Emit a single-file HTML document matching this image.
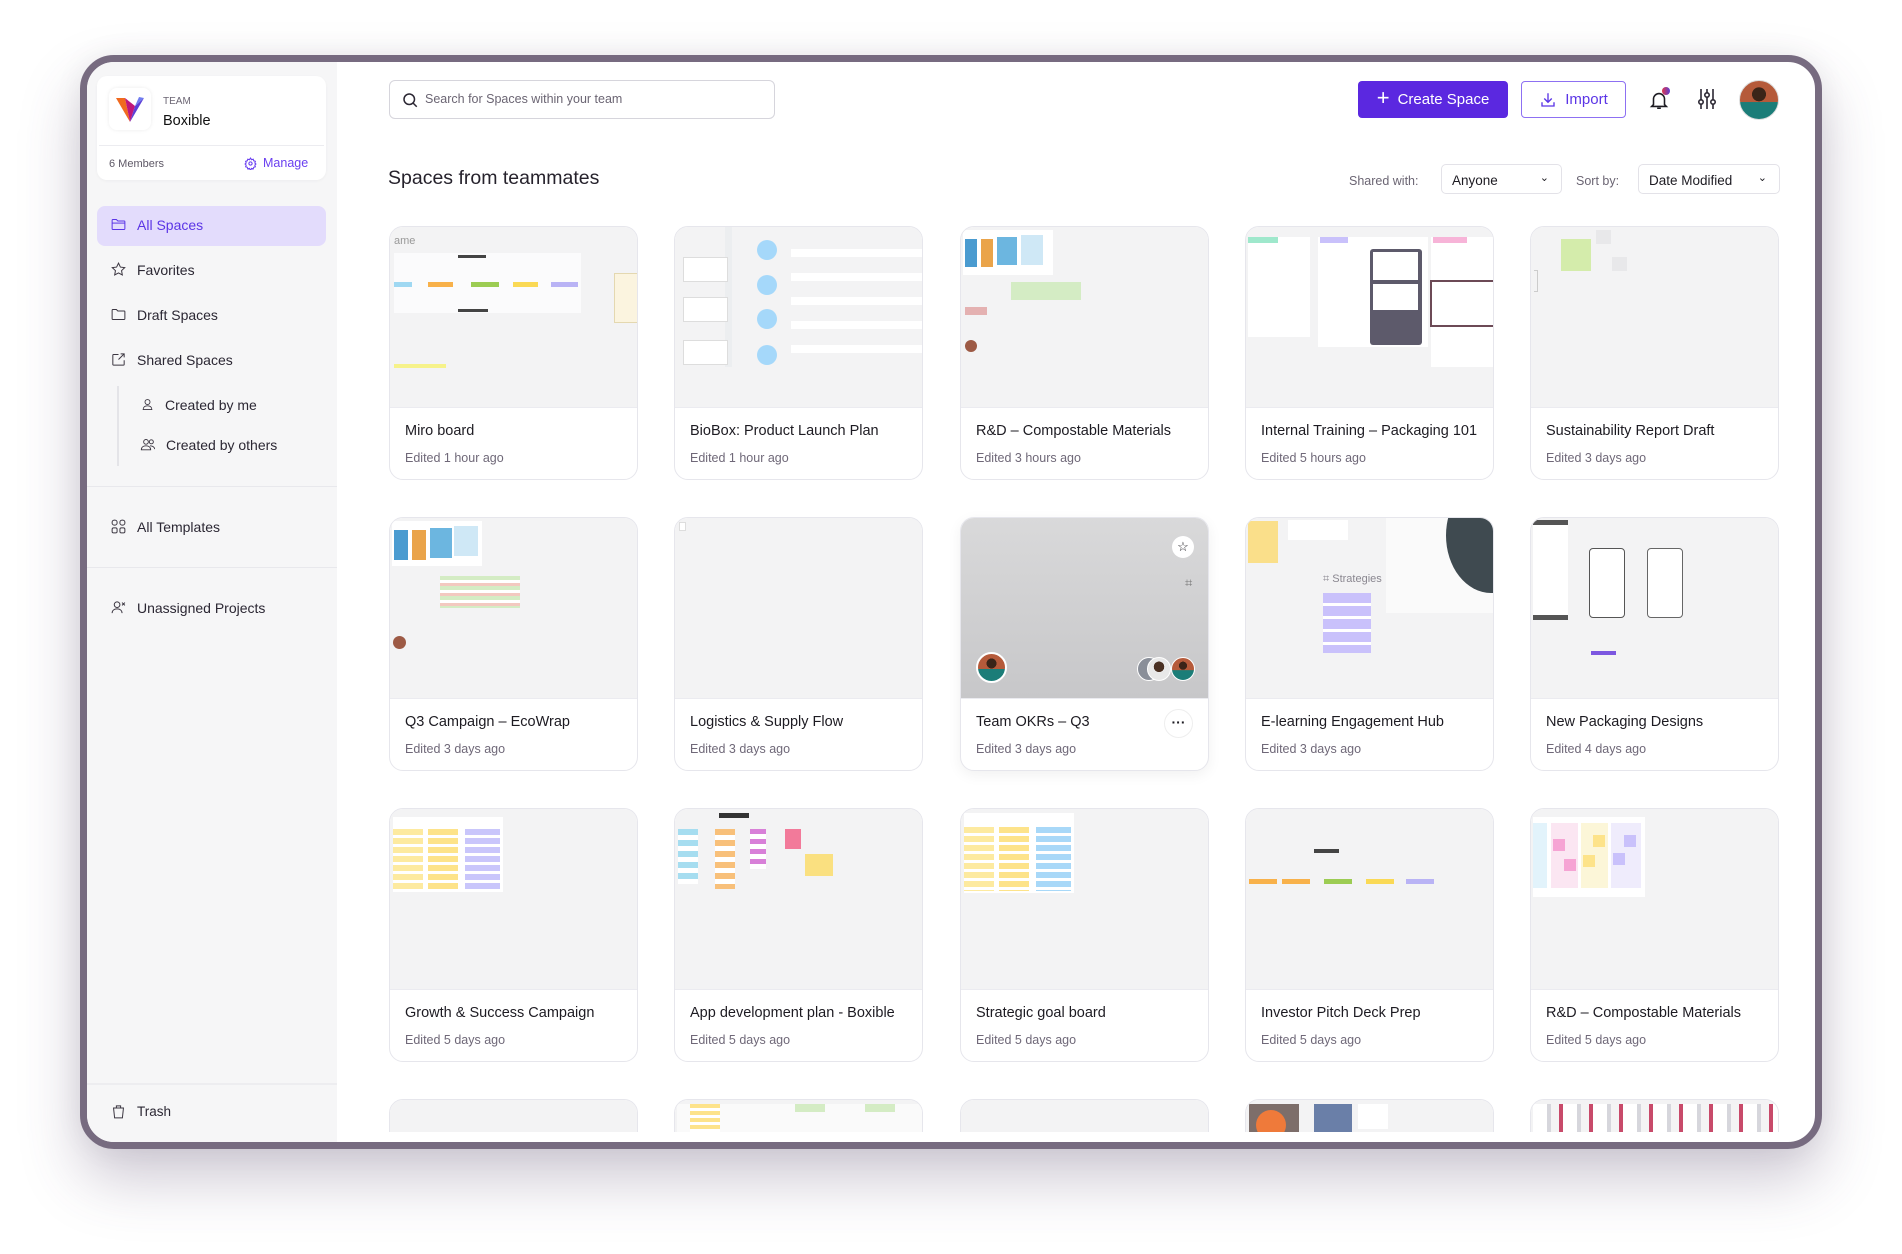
<!DOCTYPE html>
<html><head><meta charset="utf-8"><style>
*{box-sizing:border-box;margin:0;padding:0}
html,body{width:1902px;height:1254px;overflow:hidden}
body{background:#fff;font-family:"Liberation Sans",sans-serif;position:relative;color:#1d1b22}
.frame{position:absolute;left:80px;top:55px;width:1742px;height:1094px;border:7px solid #776b80;border-radius:34px;background:#fff;overflow:hidden;box-shadow:0 30px 60px rgba(80,60,100,.28),0 0 30px rgba(0,0,0,.06)}
.abs{position:absolute}
.side{left:0;top:0;width:250px;height:100%;background:#f6f6f7}
.tc{left:10px;top:14px;width:229px;height:104px;background:#fff;border-radius:10px;box-shadow:0 1px 3px rgba(0,0,0,.04)}
.nav{position:absolute;left:35px;font-size:14px;color:#2b2733;display:flex;align-items:center;gap:10px}
.nav svg{width:17px;height:17px;fill:none;stroke:#3a3540;stroke-width:1.4}
.hr{position:absolute;left:0;width:250px;height:1px;background:#e8e8ec}
.main{left:250px;top:0;right:0;height:1070px;overflow:hidden}
.card{position:absolute;width:249px;height:254px;border:1px solid #e6e6ec;border-radius:14px;background:#fff;overflow:hidden}
.th{position:absolute;left:0;top:0;width:100%;height:181px;background:#f3f3f4;border-bottom:1px solid #ebebf0;overflow:hidden}
.t{position:absolute;left:15px;top:196px;font-size:14.5px;color:#1d1b22;white-space:nowrap}
.s{position:absolute;left:15px;top:224px;font-size:12.5px;color:#6f6878}
.b{position:absolute}
</style></head><body>
<div class="frame">
 <div class="abs side">
  <div class="abs tc">
   <div class="abs" style="left:12px;top:12px;width:42px;height:42px;border-radius:8px;background:#fff;box-shadow:0 0 4px rgba(0,0,0,.08)">
    <svg width="42" height="42" viewBox="0 0 42 42"><path d="M7 10 L21 34 L16 10Z" fill="#f06a1f"/><path d="M16 10 L21 34 L26 18Z" fill="#c0177a"/><path d="M26 18 L21 34 L35 10Z" fill="#5b3fd6"/><path d="M26 18 L35 10 L30 9Z" fill="#6f7cf0"/></svg>
   </div>
   <div class="abs" style="left:66px;top:20px;font-size:10px;color:#6b6573">TEAM</div>
   <div class="abs" style="left:66px;top:37px;font-size:14.5px;color:#111">Boxible</div>
   <div class="abs" style="left:2px;top:69px;width:225px;height:1px;background:#ececf0"></div>
   <div class="abs" style="left:12px;top:82px;font-size:11px;color:#5e5866">6 Members</div>
   <div class="abs" style="left:147px;top:80px;font-size:12.5px;color:#6a3ff0;display:flex;align-items:center;gap:6px"><svg width="13" height="13" viewBox="0 0 24 24" fill="none" stroke="#6a3ff0" stroke-width="2"><circle cx="12" cy="12" r="3"/><path d="M12 2l2 3 3-1 1 3 3 1-1 3 2 2-2 2 1 3-3 1-1 3-3-1-2 3-2-3-3 1-1-3-3-1 1-3-2-2 2-2-1-3 3-1 1-3 3 1z"/></svg>Manage</div>
  </div>
  <div class="abs" style="left:10px;top:144px;width:229px;height:40px;background:#e3dcfc;border-radius:8px"></div>
  <div class="nav" style="top:154px;left:13px;color:#5b35e6;padding-left:10px"><svg viewBox="0 0 24 24" style="stroke:#5b35e6"><path d="M3 6a1 1 0 011-1h5l2 2h9a1 1 0 011 1v10a1 1 0 01-1 1H4a1 1 0 01-1-1z"/><path d="M3 10h18"/></svg>All Spaces</div>
  <div class="nav" style="top:199px;left:23px"><svg viewBox="0 0 24 24"><path d="M12 3l2.7 5.6 6.1.8-4.5 4.2 1.1 6.1L12 16.8 6.6 19.7l1.1-6.1L3.2 9.4l6.1-.8z"/></svg>Favorites</div>
  <div class="nav" style="top:244px;left:23px"><svg viewBox="0 0 24 24"><path d="M3 6a1 1 0 011-1h5l2 2h9a1 1 0 011 1v10a1 1 0 01-1 1H4a1 1 0 01-1-1z"/></svg>Draft Spaces</div>
  <div class="nav" style="top:289px;left:23px"><svg viewBox="0 0 24 24"><path d="M20 13v6a1 1 0 01-1 1H5a1 1 0 01-1-1V6a1 1 0 011-1h7"/><path d="M15 4h5v5M20 4l-8 8"/></svg>Shared Spaces</div>
  <div class="abs" style="left:30px;top:324px;width:2px;height:80px;background:#e4e4e8"></div>
  <div class="nav" style="top:334px;left:53px"><svg viewBox="0 0 24 24" style="width:15px"><circle cx="12" cy="8" r="4"/><path d="M5 20c0-4 3-6 7-6s7 2 7 6z"/></svg>Created by me</div>
  <div class="nav" style="top:374px;left:53px"><svg viewBox="0 0 24 24" style="width:16px"><circle cx="9" cy="8" r="3.5"/><circle cx="17" cy="8" r="3"/><path d="M2 20c0-4 3-6 7-6s7 2 7 6zM15 14c4 0 7 2 7 5"/></svg>Created by others</div>
  <div class="hr" style="top:424px"></div>
  <div class="nav" style="top:456px;left:23px"><svg viewBox="0 0 24 24"><rect x="3" y="3" width="7" height="7" rx="3"/><rect x="14" y="3" width="7" height="7" rx="3"/><rect x="3" y="14" width="7" height="7" rx="2"/><rect x="14" y="14" width="7" height="7" rx="2"/></svg>All Templates</div>
  <div class="hr" style="top:505px"></div>
  <div class="nav" style="top:537px;left:23px"><svg viewBox="0 0 24 24"><circle cx="10" cy="8" r="4"/><path d="M3 20c0-4 3-6 7-6s7 2 7 6M17 5l4 4M21 5l-4 4"/></svg>Unassigned Projects</div>
  <div class="hr" style="top:1021px;height:2px;background:#ededf0"></div>
  <div class="nav" style="top:1041px;left:23px;font-size:13.5px"><svg viewBox="0 0 24 24"><path d="M5 7h14l-1.5 14h-11zM9 7V4h6v3"/></svg>Trash</div>
 </div>

 <div class="abs main">
  <div class="abs" style="left:52px;top:18px;width:386px;height:39px;border:1px solid #d6d5dc;border-radius:6px"></div>
  <svg class="abs" style="left:64px;top:29px" width="18" height="18" viewBox="0 0 24 24" fill="none" stroke="#2b2733" stroke-width="2"><circle cx="11" cy="11" r="7"/><path d="M16 16l5 5"/></svg>
  <div class="abs" style="left:88px;top:30px;font-size:12.5px;color:#6b6573">Search for Spaces within your team</div>
  <div class="abs" style="left:1021px;top:19px;width:150px;height:37px;background:#5b28e0;border-radius:4px;color:#fff;font-size:15px;display:flex;align-items:center;justify-content:center;gap:8px"><span style="font-size:22px;font-weight:300;margin-top:-3px">+</span>Create Space</div>
  <div class="abs" style="left:1184px;top:19px;width:105px;height:37px;border:1.5px solid #8d70f2;border-radius:4px;color:#5b35e6;font-size:15px;display:flex;align-items:center;justify-content:center;gap:8px"><svg width="18" height="18" viewBox="0 0 24 24" fill="none" stroke="#5b35e6" stroke-width="1.8"><path d="M12 3v12M7 10l5 5 5-5M4 15v5h16v-5"/></svg>Import</div>
  <svg class="abs" style="left:1311px;top:26px" width="22" height="24" viewBox="0 0 24 24" fill="none" stroke="#1d1b22" stroke-width="1.7"><path d="M6 17V11a6 6 0 0112 0v6l2 2H4z M10 21h4"/></svg>
  <div class="abs" style="left:1325px;top:25px;width:8px;height:8px;border-radius:50%;background:linear-gradient(90deg,#e0364a,#5b3fd6)"></div>
  <svg class="abs" style="left:1360px;top:26px" width="20" height="22" viewBox="0 0 20 22" fill="none" stroke="#2b2733" stroke-width="1.6"><path d="M4 1v20M10 1v20M16 1v20"/><circle cx="4" cy="14" r="2.2" fill="#fff"/><circle cx="10" cy="7" r="2.2" fill="#fff"/><circle cx="16" cy="14" r="2.2" fill="#fff"/></svg>
  <div class="abs" style="left:1402px;top:18px;width:40px;height:40px;border-radius:50%;background:radial-gradient(circle at 50% 35%,#3a2418 0 22%,transparent 23%),linear-gradient(180deg,#b55a3a 0 55%,#1b7d78 56%);border:1.5px solid #ddd"></div>

  <div class="abs" style="left:51px;top:105px;font-size:19.5px;color:#26222c">Spaces from teammates</div>
  <div class="abs" style="left:1012px;top:112px;font-size:12.5px;color:#6b6573">Shared with:</div>
  <div class="abs" style="left:1104px;top:102px;width:121px;height:30px;border:1px solid #e3e2e8;border-radius:5px;font-size:13.5px;padding:8px 0 0 10px">Anyone<span style="position:absolute;right:12px;top:6px;font-size:11px">⌄</span></div>
  <div class="abs" style="left:1239px;top:112px;font-size:12.5px;color:#6b6573">Sort by:</div>
  <div class="abs" style="left:1301px;top:102px;width:142px;height:30px;border:1px solid #e3e2e8;border-radius:5px;font-size:13.5px;padding:8px 0 0 10px">Date Modified<span style="position:absolute;right:12px;top:6px;font-size:11px">⌄</span></div>

  <!-- row1 -->
  <div class="card" style="left:52px;top:164px"><div class="th">
   <div class="b" style="left:4px;top:8px;font-size:11px;color:#999">ame</div>
   <div class="b" style="left:4px;top:26px;width:187px;height:60px;background:#fbfbfc"></div>
   <div class="b" style="left:4px;top:55px;width:18px;height:5px;background:#9fd8f2"></div><div class="b" style="left:38px;top:55px;width:25px;height:5px;background:#f8b14a"></div><div class="b" style="left:81px;top:55px;width:28px;height:5px;background:#9ccc53"></div><div class="b" style="left:123px;top:55px;width:25px;height:5px;background:#fad955"></div><div class="b" style="left:161px;top:55px;width:27px;height:5px;background:#b9b3f5"></div>
   <div class="b" style="left:68px;top:28px;width:28px;height:3px;background:#444"></div><div class="b" style="left:68px;top:82px;width:30px;height:3px;background:#444"></div>
   <div class="b" style="left:224px;top:46px;width:25px;height:50px;background:#fbf4df;border:1px solid #e4d8b0"></div>
   <div class="b" style="left:4px;top:137px;width:52px;height:4px;background:#f6f28a"></div>
  </div><div class="t">Miro board</div><div class="s">Edited 1 hour ago</div></div>

  <div class="card" style="left:337px;top:164px"><div class="th">
   <div class="b" style="left:50px;top:0;width:7px;height:140px;background:#eceef0"></div>
   <div class="b" style="left:8px;top:30px;width:45px;height:25px;background:#fff;border:1px solid #ddd"></div>
   <div class="b" style="left:8px;top:70px;width:45px;height:25px;background:#fff;border:1px solid #ddd"></div>
   <div class="b" style="left:8px;top:113px;width:45px;height:25px;background:#fff;border:1px solid #ddd"></div>
   <div class="b" style="left:82px;top:13px;width:20px;height:20px;border-radius:50%;background:#a5d8fa"></div>
   <div class="b" style="left:82px;top:48px;width:20px;height:20px;border-radius:50%;background:#a5d8fa"></div>
   <div class="b" style="left:82px;top:82px;width:20px;height:20px;border-radius:50%;background:#a5d8fa"></div>
   <div class="b" style="left:82px;top:118px;width:20px;height:20px;border-radius:50%;background:#a5d8fa"></div>
   <div class="b" style="left:116px;top:12px;width:133px;height:130px;background:repeating-linear-gradient(180deg,transparent 0 10px,#fff 10px 18px,transparent 18px 24px)"></div>
  </div><div class="t">BioBox: Product Launch Plan</div><div class="s">Edited 1 hour ago</div></div>

  <div class="card" style="left:623px;top:164px"><div class="th">
   <div class="b" style="left:2px;top:3px;width:90px;height:45px;background:#fff"></div>
   <div class="b" style="left:4px;top:12px;width:12px;height:28px;background:#4a9bd0"></div><div class="b" style="left:20px;top:12px;width:12px;height:28px;background:#eaa44a"></div><div class="b" style="left:36px;top:10px;width:20px;height:28px;background:#6cb6e0"></div><div class="b" style="left:60px;top:8px;width:22px;height:30px;background:#cfe8f6"></div>
   <div class="b" style="left:50px;top:55px;width:70px;height:18px;background:#d4ecc4"></div>
   <div class="b" style="left:4px;top:80px;width:22px;height:8px;background:#e4b1b1"></div>
   <div class="b" style="left:4px;top:113px;width:12px;height:12px;border-radius:50%;background:#9d5a45"></div>
  </div><div class="t">R&amp;D – Compostable Materials</div><div class="s">Edited 3 hours ago</div></div>

  <div class="card" style="left:908px;top:164px"><div class="th">
   <div class="b" style="left:2px;top:10px;width:62px;height:100px;background:#fff"></div><div class="b" style="left:2px;top:10px;width:30px;height:6px;background:#9fe8cc"></div>
   <div class="b" style="left:72px;top:10px;width:110px;height:110px;background:#fff"></div><div class="b" style="left:74px;top:10px;width:28px;height:6px;background:#c9c1fb"></div>
   <div class="b" style="left:124px;top:22px;width:52px;height:96px;background:#5d5a6b;border-radius:3px"></div>
   <div class="b" style="left:127px;top:25px;width:45px;height:28px;background:#fff"></div><div class="b" style="left:127px;top:57px;width:45px;height:26px;background:#fff"></div>
   <div class="b" style="left:185px;top:10px;width:64px;height:130px;background:#fff"></div><div class="b" style="left:187px;top:10px;width:34px;height:6px;background:#f7b4d8"></div>
   <div class="b" style="left:184px;top:53px;width:65px;height:47px;border:2px solid #6c4a56"></div>
  </div><div class="t">Internal Training – Packaging 101</div><div class="s">Edited 5 hours ago</div></div>

  <div class="card" style="left:1193px;top:164px"><div class="th">
   <div class="b" style="left:30px;top:12px;width:30px;height:32px;background:#d4ecab"></div>
   <div class="b" style="left:65px;top:3px;width:15px;height:14px;background:#e8e8ea"></div>
   <div class="b" style="left:81px;top:30px;width:15px;height:14px;background:#e8e8ea"></div>
   <div class="b" style="left:3px;top:43px;width:4px;height:22px;border:1px solid #ccc;border-left:none"></div>
  </div><div class="t">Sustainability Report Draft</div><div class="s">Edited 3 days ago</div></div>

  <!-- row2 -->
  <div class="card" style="left:52px;top:455px"><div class="th">
   <div class="b" style="left:2px;top:3px;width:90px;height:45px;background:#fff"></div>
   <div class="b" style="left:4px;top:12px;width:14px;height:30px;background:#4a9bd0"></div><div class="b" style="left:22px;top:12px;width:14px;height:30px;background:#eaa44a"></div><div class="b" style="left:40px;top:10px;width:22px;height:30px;background:#6cb6e0"></div><div class="b" style="left:64px;top:8px;width:24px;height:30px;background:#cfe8f6"></div>
   <div class="b" style="left:50px;top:58px;width:80px;height:32px;background:repeating-linear-gradient(180deg,#d4ecc4 0 4px,#fff 4px 7px,#f3c9c0 7px 10px)"></div>
   <div class="b" style="left:3px;top:118px;width:13px;height:13px;border-radius:50%;background:#9d5a45"></div>
  </div><div class="t">Q3 Campaign – EcoWrap</div><div class="s">Edited 3 days ago</div></div>

  <div class="card" style="left:337px;top:455px"><div class="th"><div class="b" style="left:4px;top:4px;width:7px;height:9px;background:#fff;border:1px solid #ddd"></div></div><div class="t">Logistics &amp; Supply Flow</div><div class="s">Edited 3 days ago</div></div>

  <div class="card" style="left:623px;top:455px;box-shadow:0 4px 14px rgba(0,0,0,.06)"><div class="th" style="background:linear-gradient(180deg,#d9d9da,#c7c7c9)">
   <div class="b" style="left:211px;top:18px;width:22px;height:22px;border-radius:50%;background:#fff;font-size:13px;text-align:center;line-height:22px">☆</div>
   <div class="b" style="left:224px;top:57px;font-size:13px;color:#777">⌗</div>
   <div class="b" style="left:15px;top:134px;width:31px;height:31px;border-radius:50%;border:2px solid #fff;background:radial-gradient(circle at 50% 35%,#3a2418 0 22%,transparent 23%),linear-gradient(180deg,#b55a3a 0 55%,#1b7d78 56%)"></div>
   <div class="b" style="left:176px;top:139px;width:24px;height:24px;border-radius:50%;border:1.5px solid #fff;background:#8a8f99"></div>
   <div class="b" style="left:186px;top:139px;width:24px;height:24px;border-radius:50%;border:1.5px solid #fff;background:radial-gradient(circle at 50% 40%,#4a3022 0 30%,#e8e8e8 31%)"></div>
   <div class="b" style="left:210px;top:139px;width:24px;height:24px;border-radius:50%;border:1.5px solid #fff;background:radial-gradient(circle at 50% 35%,#3a2418 0 22%,transparent 23%),linear-gradient(180deg,#b55a3a 0 55%,#1b7d78 56%)"></div>
  </div><div class="t">Team OKRs – Q3</div><div class="s">Edited 3 days ago</div>
   <div class="b" style="left:203px;top:191px;width:29px;height:29px;border-radius:50%;border:1px solid #eee;text-align:center;line-height:24px;font-weight:bold;font-size:14px">···</div></div>

  <div class="card" style="left:908px;top:455px"><div class="th">
   <div class="b" style="left:2px;top:3px;width:30px;height:42px;background:#fadf8a"></div>
   <div class="b" style="left:42px;top:2px;width:60px;height:20px;background:#fff"></div>
   <div class="b" style="left:77px;top:55px;font-size:11px;color:#8a8790">⌗ Strategies</div>
   <div class="b" style="left:77px;top:75px;width:48px;height:60px;background:repeating-linear-gradient(180deg,#c9c1fb 0 10px,#fff 10px 13px)"></div>
   <div class="b" style="left:140px;top:0;width:109px;height:95px;background:#fafafa"></div>
   <div class="b" style="left:200px;top:-40px;width:90px;height:115px;border-radius:50%;background:#3f4a50"></div>
  </div><div class="t">E-learning Engagement Hub</div><div class="s">Edited 3 days ago</div></div>

  <div class="card" style="left:1193px;top:455px"><div class="th">
   <div class="b" style="left:2px;top:2px;width:35px;height:100px;background:#fff"></div>
   <div class="b" style="left:2px;top:2px;width:35px;height:5px;background:#555"></div><div class="b" style="left:2px;top:97px;width:35px;height:5px;background:#555"></div>
   <div class="b" style="left:58px;top:30px;width:36px;height:70px;border:1.5px solid #555;border-radius:4px;background:#fff"></div>
   <div class="b" style="left:116px;top:30px;width:36px;height:70px;border:1.5px solid #666;border-radius:4px;background:#fff"></div>
   <div class="b" style="left:60px;top:133px;width:25px;height:4px;background:#7c57e0"></div>
  </div><div class="t">New Packaging Designs</div><div class="s">Edited 4 days ago</div></div>

  <!-- row3 -->
  <div class="card" style="left:52px;top:746px"><div class="th">
   <div class="b" style="left:3px;top:8px;width:110px;height:75px;background:#fff"></div>
   <div class="b" style="left:3px;top:20px;width:30px;height:60px;background:repeating-linear-gradient(180deg,#fdeaa0 0 6px,#fff 6px 9px)"></div>
   <div class="b" style="left:38px;top:20px;width:30px;height:60px;background:repeating-linear-gradient(180deg,#fde38a 0 6px,#fff 6px 9px)"></div>
   <div class="b" style="left:75px;top:20px;width:35px;height:60px;background:repeating-linear-gradient(180deg,#c9c6fb 0 6px,#fff 6px 9px)"></div>
  </div><div class="t">Growth &amp; Success Campaign</div><div class="s">Edited 5 days ago</div></div>

  <div class="card" style="left:337px;top:746px"><div class="th">
   <div class="b" style="left:44px;top:4px;width:30px;height:5px;background:#333"></div>
   <div class="b" style="left:3px;top:20px;width:20px;height:55px;background:repeating-linear-gradient(180deg,#a6ddf0 0 6px,#fff 6px 11px)"></div>
   <div class="b" style="left:40px;top:20px;width:20px;height:60px;background:repeating-linear-gradient(180deg,#f8c07a 0 6px,#fff 6px 11px)"></div>
   <div class="b" style="left:75px;top:20px;width:16px;height:40px;background:repeating-linear-gradient(180deg,#d880d8 0 5px,#fff 5px 10px)"></div>
   <div class="b" style="left:110px;top:20px;width:16px;height:20px;background:#f27a9a"></div>
   <div class="b" style="left:130px;top:45px;width:28px;height:22px;background:#fae080"></div>
  </div><div class="t">App development plan - Boxible</div><div class="s">Edited 5 days ago</div></div>

  <div class="card" style="left:623px;top:746px"><div class="th">
   <div class="b" style="left:3px;top:4px;width:110px;height:80px;background:#fff"></div>
   <div class="b" style="left:3px;top:18px;width:30px;height:64px;background:repeating-linear-gradient(180deg,#fdeaa0 0 6px,#fff 6px 9px)"></div>
   <div class="b" style="left:38px;top:18px;width:30px;height:64px;background:repeating-linear-gradient(180deg,#fde38a 0 6px,#fff 6px 9px)"></div>
   <div class="b" style="left:75px;top:18px;width:35px;height:64px;background:repeating-linear-gradient(180deg,#a8d8f8 0 6px,#fff 6px 9px)"></div>
  </div><div class="t">Strategic goal board</div><div class="s">Edited 5 days ago</div></div>

  <div class="card" style="left:908px;top:746px"><div class="th">
   <div class="b" style="left:68px;top:40px;width:25px;height:4px;background:#444"></div>
   <div class="b" style="left:3px;top:70px;width:28px;height:5px;background:#f8b14a"></div><div class="b" style="left:36px;top:70px;width:28px;height:5px;background:#f8b14a"></div><div class="b" style="left:78px;top:70px;width:28px;height:5px;background:#9ccc53"></div><div class="b" style="left:120px;top:70px;width:28px;height:5px;background:#fad955"></div><div class="b" style="left:160px;top:70px;width:28px;height:5px;background:#b9b3f5"></div>
  </div><div class="t">Investor Pitch Deck Prep</div><div class="s">Edited 5 days ago</div></div>

  <div class="card" style="left:1193px;top:746px"><div class="th">
   <div class="b" style="left:2px;top:8px;width:112px;height:80px;background:#fff"></div>
   <div class="b" style="left:2px;top:14px;width:14px;height:65px;background:#e2f3fb"></div>
   <div class="b" style="left:20px;top:14px;width:27px;height:65px;background:#fbe6f2"></div><div class="b" style="left:22px;top:30px;width:12px;height:12px;background:#f6a4d4"></div><div class="b" style="left:33px;top:50px;width:12px;height:12px;background:#f6a4d4"></div>
   <div class="b" style="left:50px;top:14px;width:27px;height:65px;background:#fcf6d8"></div><div class="b" style="left:62px;top:26px;width:12px;height:12px;background:#fde38a"></div><div class="b" style="left:52px;top:46px;width:12px;height:12px;background:#fde38a"></div>
   <div class="b" style="left:80px;top:14px;width:30px;height:65px;background:#efecfc"></div><div class="b" style="left:93px;top:26px;width:12px;height:12px;background:#c9c1fb"></div><div class="b" style="left:82px;top:44px;width:12px;height:12px;background:#c9c1fb"></div>
  </div><div class="t">R&amp;D – Compostable Materials</div><div class="s">Edited 5 days ago</div></div>

  <!-- row4 partial -->
  <div class="card" style="left:52px;top:1037px"><div class="th"></div></div>
  <div class="card" style="left:337px;top:1037px"><div class="th"><div class="b" style="left:2px;top:4px;width:245px;height:30px;background:#fafafa"></div><div class="b" style="left:15px;top:4px;width:30px;height:30px;background:repeating-linear-gradient(180deg,#fde38a 0 4px,#fff 4px 7px)"></div><div class="b" style="left:120px;top:4px;width:30px;height:8px;background:#d4ecc4"></div><div class="b" style="left:190px;top:4px;width:30px;height:8px;background:#d4ecc4"></div></div></div>
  <div class="card" style="left:623px;top:1037px"><div class="th"></div></div>
  <div class="card" style="left:908px;top:1037px"><div class="th"><div class="b" style="left:3px;top:4px;width:50px;height:30px;background:#7d6e6a"></div><div class="b" style="left:10px;top:10px;width:30px;height:30px;border-radius:50%;background:#ef7a3a"></div><div class="b" style="left:68px;top:4px;width:38px;height:30px;background:#6a7fa8"></div><div class="b" style="left:112px;top:4px;width:30px;height:25px;background:#fff"></div></div></div>
  <div class="card" style="left:1193px;top:1037px"><div class="th"><div class="b" style="left:2px;top:4px;width:245px;height:30px;background:repeating-linear-gradient(90deg,#fff 0 14px,#d6d6dc 14px 18px,#f4f4f4 18px 26px,#c84a6a 26px 30px)"></div></div></div>
 </div>
</div>
</body></html>
